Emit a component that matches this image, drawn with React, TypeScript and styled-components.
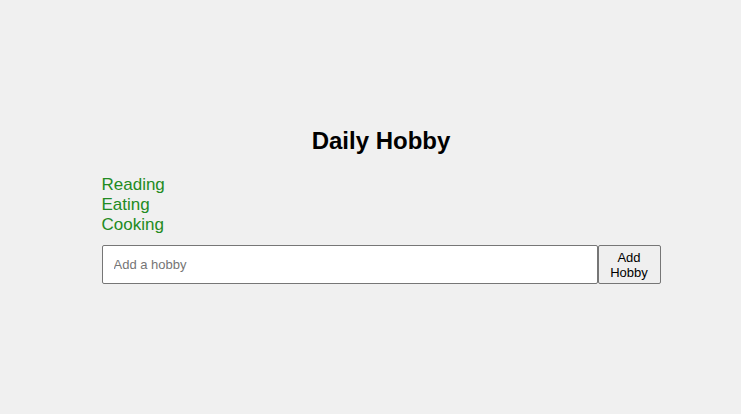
import React, { useState } from 'react';
import styled, { createGlobalStyle } from 'styled-components';

const GlobalStyle = createGlobalStyle`
    html, body {
        margin: 0;
        padding: 0;
        background: #f0f0f0;
        font-family: "Liberation Sans", Arial, sans-serif;
    }
`;

const Page = styled.div`
    box-sizing: border-box;
    min-height: 414px;
    padding: 0 0 3px 21px;
    display: flex;
    align-items: center;
    justify-content: center;
`;

const Card = styled.div`
    width: 559px;
    display: flex;
    flex-direction: column;
`;

const Title = styled.h1`
    margin: 0 0 20px;
    font-size: 24px;
    font-weight: bold;
    text-align: center;
    color: #000;
`;

const List = styled.ul`
    list-style: none;
    margin: 0 0 10px;
    padding: 0;
`;

const Item = styled.li`
    font-size: 17px;
    line-height: 20px;
    color: #228b22;
`;

const Form = styled.form`
    display: flex;
    height: 39px;
`;

const Input = styled.input`
    box-sizing: border-box;
    flex: 1;
    height: 100%;
    margin: 0;
    padding: 0 11px;
    border: 1px solid #767676;
    border-radius: 2px;
    background: #fff;
    font-family: "Liberation Sans", Arial, sans-serif;
    font-size: 13px;
    color: #000;
    outline: none;

    &::placeholder {
        color: #757575;
    }
`;

const Button = styled.button`
    box-sizing: border-box;
    width: 63px;
    height: 100%;
    margin: 0;
    padding: 0 6px;
    border: 1px solid #767676;
    border-radius: 2px;
    background: #efefef;
    font-family: "Liberation Sans", Arial, sans-serif;
    font-size: 13px;
    line-height: 15px;
    color: #000;
`;

export default function App() {
    const [hobbies, setHobbies] = useState(['Reading', 'Eating', 'Cooking']);
    const [value, setValue] = useState('');

    const add = (e: React.FormEvent) => {
        e.preventDefault();
        if (!value.trim()) return;
        setHobbies([...hobbies, value.trim()]);
        setValue('');
    };

    return (
        <>
            <GlobalStyle />
            <Page>
                <Card>
                    <Title>Daily Hobby</Title>
                    <List>
                        {hobbies.map(h => (
                            <Item key={h}>{h}</Item>
                        ))}
                    </List>
                    <Form onSubmit={add}>
                        <Input
                            placeholder="Add a hobby"
                            value={value}
                            onChange={e => setValue(e.target.value)}
                        />
                        <Button type="submit">Add Hobby</Button>
                    </Form>
                </Card>
            </Page>
        </>
    );
}
